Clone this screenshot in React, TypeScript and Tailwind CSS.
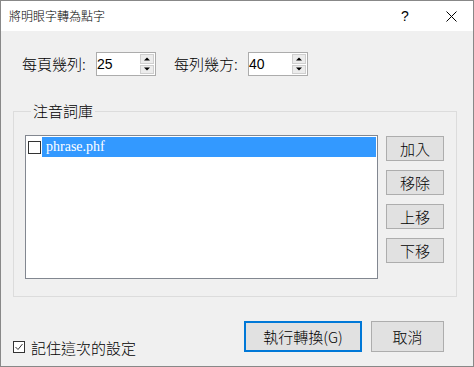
import React from "react";

function Spin({ value }: { value: string }) {
  return (
    <div className="w-[60px] h-[24px] border border-[#acacac] bg-white flex">
      <span className="flex-1 pl-[0px] text-[14px] leading-[22px] font-['Liberation_Sans',sans-serif] font-normal text-black">
        {value}
      </span>
      <div className="flex flex-col w-[14px] py-[1px] mr-[1px] gap-[1px]">
        <div className="flex-1 border border-[#cfcfcf] bg-[#ececec] flex items-center justify-center">
          <svg width="6" height="4" viewBox="0 0 6 4">
            <path d="M0 3.5 L3 0.5 L6 3.5 Z" fill="#000" />
          </svg>
        </div>
        <div className="flex-1 border border-[#cfcfcf] bg-[#ececec] flex items-center justify-center">
          <svg width="6" height="4" viewBox="0 0 6 4">
            <path d="M0 0.5 L3 3.5 L6 0.5 Z" fill="#000" />
          </svg>
        </div>
      </div>
    </div>
  );
}

function SideBtn({ label }: { label: string }) {
  return (
    <div className="w-[58px] h-[25px] border border-[#adadad] bg-[#e1e1e1] flex items-center justify-center text-[15px] leading-[20px]">
      {label}
    </div>
  );
}

export default function App() {
  return (
    <div className="w-[474px] h-[367px] border border-[#888888] bg-[#f0f0f0] flex flex-col font-['Noto_Sans_CJK_TC','Noto_Sans',sans-serif] font-light text-black">
      {/* Title bar */}
      <div className="h-[30px] bg-white flex items-center shrink-0">
        <span className="pl-[8px] flex-1 text-[12px] leading-[16px]">將明眼字轉為點字</span>
        <span className="w-[46px] pl-[2px] text-center text-[14px] leading-[16px] font-['Liberation_Sans',sans-serif] font-normal">?</span>
        <span className="w-[46px] pl-[2px] flex items-center justify-center">
          <svg width="11" height="11" viewBox="0 0 11 11">
            <path d="M0.5 0.5 L10.5 10.5 M10.5 0.5 L0.5 10.5" stroke="#000" strokeWidth="1" />
          </svg>
        </span>
      </div>

      {/* Row 1 */}
      <div className="flex items-center mt-[21px] pl-[21px] h-[24px] shrink-0">
        <span className="w-[74px] text-[15px] leading-[20px]">每頁幾列:</span>
        <Spin value="25" />
        <span className="ml-[18px] w-[74px] text-[15px] leading-[20px]">每列幾方:</span>
        <Spin value="40" />
      </div>

      {/* Group box */}
      <fieldset className="mt-[25px] ml-[12px] w-[444px] border border-[#dcdcdc] pl-[11px] pr-[12px] pt-[14px] pb-[17px] shrink-0">
        <legend className="ml-[6px] px-[2px] text-[15px] leading-[20px]">注音詞庫</legend>
        <div className="flex">
          <div className="w-[353px] h-[144px] border border-[#828790] bg-white">
            <div className="flex items-center h-[20px] mt-[1px]">
              <div className="ml-[2px] mr-[1px] w-[13px] h-[13px] border border-[#333333] bg-white" />
              <div className="flex-1 mr-[1px] h-[20px] bg-[#3399ff] text-white pl-[4px] text-[14px] leading-[20px] font-['Liberation_Serif',serif] font-normal">
                phrase.phf
              </div>
            </div>
          </div>
          <div className="ml-[8px] mt-[1px] flex flex-col gap-[9px]">
            <SideBtn label="加入" />
            <SideBtn label="移除" />
            <SideBtn label="上移" />
            <SideBtn label="下移" />
          </div>
        </div>
      </fieldset>

      {/* Bottom row */}
      <div className="mt-[24px] pl-[12px] mr-[29px] flex items-start shrink-0">
        <div className="mt-[17px] flex items-start gap-[6px]">
          <div className="mt-[3px] w-[12px] h-[12px] border border-[#333333] bg-white flex items-center justify-center">
            <svg width="10" height="10" viewBox="0 0 10 10">
              <path d="M1.5 5 L4 7.5 L8.5 2" stroke="#333" strokeWidth="1" fill="none" />
            </svg>
          </div>
          <span className="text-[15px] leading-[20px]">記住這次的設定</span>
        </div>
        <div className="ml-auto w-[118px] h-[31px] border-2 border-[#0078d7] bg-[#e1e1e1] flex items-center justify-center text-[15px] leading-[20px]">
          執行轉換(G)
        </div>
        <div className="ml-[9px] w-[73px] h-[31px] border border-[#adadad] bg-[#e1e1e1] flex items-center justify-center text-[15px] leading-[20px]">
          取消
        </div>
      </div>
    </div>
  );
}
